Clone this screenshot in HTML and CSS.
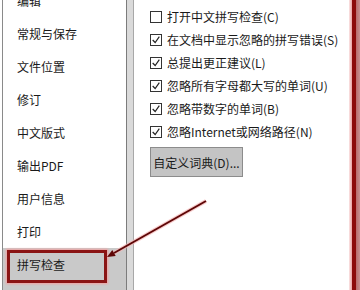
FILE: index.html
```html
<!DOCTYPE html>
<html lang="zh-CN">
<head>
<meta charset="UTF-8">
<title>选项 - 拼写检查</title>
<link rel="stylesheet" href="styles.css">
</head>
<body>
<div class="window">
    <!-- 左侧分类 -->
    <ul class="sidebar">
        <li>编辑</li>
        <li>常规与保存</li>
        <li>文件位置</li>
        <li>修订</li>
        <li>中文版式</li>
        <li>输出PDF</li>
        <li>用户信息</li>
        <li>打印</li>
        <li class="active">拼写检查<span class="mark-box"></span></li>
    </ul>

    <div class="splitter"></div>

    <!-- 拼写检查选项 -->
    <div class="panel">
        <label class="row"><span class="check"></span>打开中文拼写检查(C)</label>
        <label class="row"><span class="check on"><svg viewBox="0 0 12 12"><polyline points="2,6 5,9 10,2"/></svg></span>在文档中显示忽略的拼写错误(S)</label>
        <label class="row"><span class="check on"><svg viewBox="0 0 12 12"><polyline points="2,6 5,9 10,2"/></svg></span>总提出更正建议(L)</label>
        <label class="row"><span class="check on"><svg viewBox="0 0 12 12"><polyline points="2,6 5,9 10,2"/></svg></span>忽略所有字母都大写的单词(U)</label>
        <label class="row"><span class="check on"><svg viewBox="0 0 12 12"><polyline points="2,6 5,9 10,2"/></svg></span>忽略带数字的单词(B)</label>
        <label class="row"><span class="check on"><svg viewBox="0 0 12 12"><polyline points="2,6 5,9 10,2"/></svg></span>忽略Internet或网络路径(N)</label>
        <button class="dict-btn">自定义词典(D)...</button>
    </div>

    <div class="edge"></div>

    <!-- 标注箭头 -->
    <svg class="arrow" viewBox="0 0 360 290">
        <line class="halo" x1="206" y1="201" x2="114" y2="253"/>
        <line class="shaft" x1="206" y1="201" x2="114" y2="253"/>
        <polygon class="head" points="107,257 115.7,256.1 112.3,250"/>
    </svg>
</div>
</body>
</html>
```

FILE: styles.css
```css
body {
    margin: 0;
    background-color: #fff;
    font-family: "Noto Sans CJK SC", "Liberation Sans", sans-serif;
    font-size: 12px;
    color: #1a1a1a;
}
.window {
    position: relative;
    display: flex;
    width: 360px;
    height: 290px;
    overflow: hidden;
    padding-left: 2px;
    box-sizing: border-box;
}
/* 左侧分类 */
.sidebar {
    list-style: none;
    margin: -16px 0 0 0;
    padding: 0;
    width: 123px;
    border-left: 1px solid #8a8a8a;
    flex-shrink: 0;
}
.sidebar li {
    height: 33px;
    line-height: 33px;
    padding-left: 14px;
    white-space: nowrap;
}
.sidebar li.active {
    position: relative;
    height: 60px;
    background-color: #c9c9c9;
}
.mark-box {
    position: absolute;
    left: 4px;
    top: 2px;
    width: 94px;
    height: 27px;
    border: 3px solid #8a1414;
    box-shadow: 0 0 2px 1px #f2a0a0;
}
.splitter {
    width: 6px;
    flex-shrink: 0;
    background-color: #dadada;
    border-left: 1px solid #7c7c7c;
    border-right: 1px solid #a8a8a8;
}
/* 右侧选项 */
.panel {
    flex: 1;
    padding: 5px 0 0 16px;
}
.row {
    display: flex;
    align-items: center;
    height: 23px;
    white-space: nowrap;
}
.check {
    width: 10px;
    height: 10px;
    border: 1px solid #333;
    margin-right: 5px;
    background-color: #fff;
    flex-shrink: 0;
}
.check svg {
    display: block;
    width: 10px;
    height: 10px;
}
.check polyline {
    fill: none;
    stroke: #222;
    stroke-width: 1.4;
}
.dict-btn {
    margin-top: 4px;
    width: 93px;
    height: 30px;
    padding: 0;
    font-family: inherit;
    font-size: 12px;
    color: #1a1a1a;
    background-color: #c4c4c4;
    border: 1px solid #8c8c8c;
}
.edge {
    width: 11px;
    flex-shrink: 0;
    background: linear-gradient(to right, #fbe6e6 0, #e8a0a0 3px, #8b0a0a 3px, #8b0a0a 7px, #b86a6a 7px, #c69090 11px);
}
/* 标注箭头 */
.arrow {
    position: absolute;
    left: 0;
    top: 0;
    width: 360px;
    height: 290px;
}
.arrow .halo {
    stroke: #f6b8b8;
    stroke-width: 4;
    opacity: 0.7;
}
.arrow .shaft {
    stroke: #5e0606;
    stroke-width: 2;
}
.arrow .head {
    fill: #5e0606;
}
```
